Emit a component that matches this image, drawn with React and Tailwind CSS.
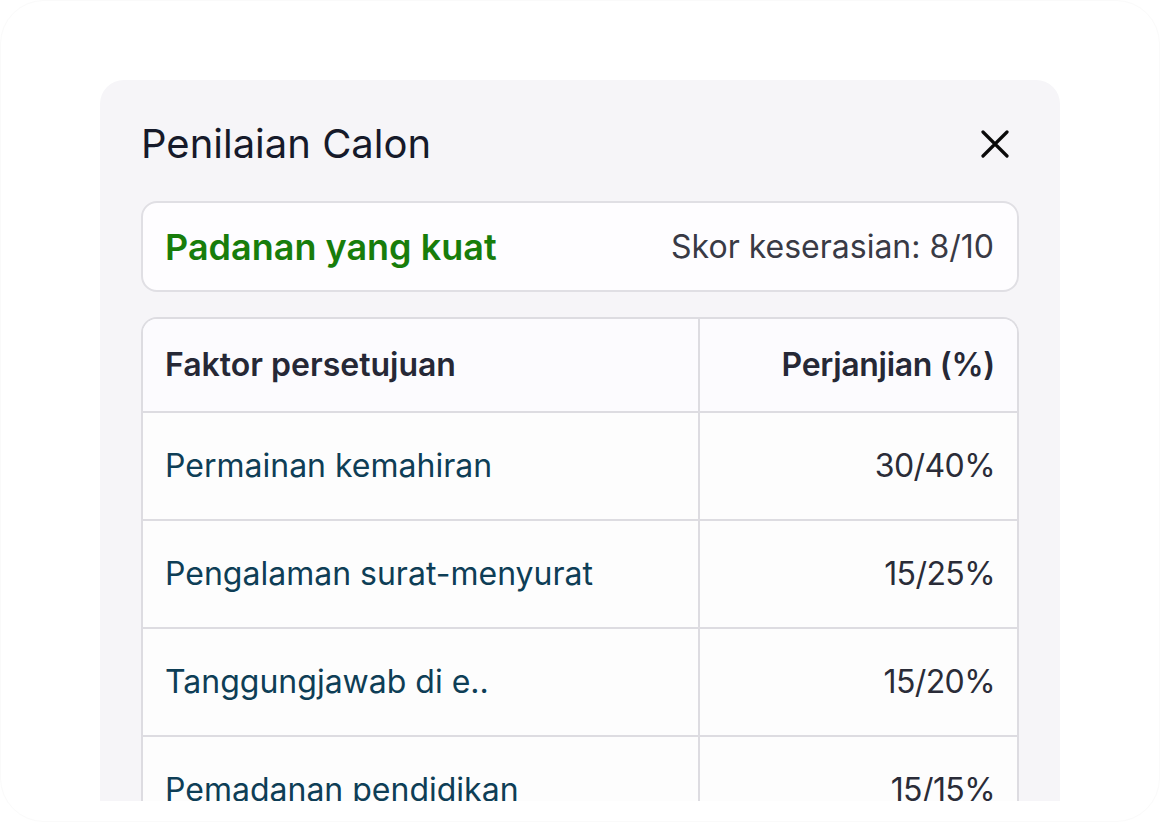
export default function App() {
  const rows = [
    ["Permainan kemahiran", "30/40%"],
    ["Pengalaman surat-menyurat", "15/25%"],
    ["Tanggungjawab di e..", "15/20%"],
    ["Pemadanan pendidikan", "15/15%"],
  ];
  return (
    <div
      className="w-[1160px] h-[822px] bg-white overflow-hidden rounded-[44px] border border-[#fafafa]"
      style={{ fontFamily: "Inter, 'Noto Sans', sans-serif" }}
    >
      <div className="ml-[99px] mt-[79px] w-[960px] h-[721px] overflow-hidden rounded-t-[24px] bg-[#f6f5f8] px-[41px] pt-[40px]">
        <div className="flex items-center h-[48px]">
          <h1 className="text-[40px] leading-[48px] text-[#161a2a]">Penilaian Calon</h1>
          <svg className="ml-auto mr-[10px]" width="28" height="28" viewBox="0 0 28 28">
            <path d="M2 2 L26 26 M26 2 L2 26" stroke="#0a0a0a" strokeWidth="3.2" strokeLinecap="round" />
          </svg>
        </div>
        <div className="mt-[33px] h-[91px] flex items-center justify-between rounded-[16px] border-2 border-[#e0dfe4] bg-[#fefdff] px-[22px]">
          <span className="text-[36px] font-semibold text-[#187d0b]">Padanan yang kuat</span>
          <span className="text-[32px] text-[#393a45] pr-[1px]">Skor keserasian: 8/10</span>
        </div>
        <div className="mt-[25px] rounded-t-[16px] border-2 border-b-0 border-[#dddce1] bg-[#fdfdfe] overflow-hidden">
          <div className="flex h-[94px] bg-[#fcfbfe] border-b-2 border-[#dddce1]">
            <div className="w-[557px] border-r-2 border-[#dddce1] flex items-center pl-[22px]">
              <span className="text-[32px] font-semibold text-[#262836]">Faktor persetujuan</span>
            </div>
            <div className="flex-1 flex items-center justify-end pr-[22px]">
              <span className="text-[32px] font-semibold text-[#262836] tracking-[-0.3px]">Perjanjian (%)</span>
            </div>
          </div>
          {rows.map(([a, b], i) => (
            <div key={i} className="flex h-[108px] border-b-2 border-[#dddce1] bg-[#fdfdfd]">
              <div className="w-[557px] border-r-2 border-[#dddce1] flex items-center pl-[22px]">
                <span className="text-[32px] text-[#0e3e56]">{a}</span>
              </div>
              <div className="flex-1 flex items-center justify-end pr-[22px]">
                <span className="text-[32px] text-[#2a2c38] tracking-[-0.6px]">{b}</span>
              </div>
            </div>
          ))}
        </div>
      </div>
    </div>
  );
}
